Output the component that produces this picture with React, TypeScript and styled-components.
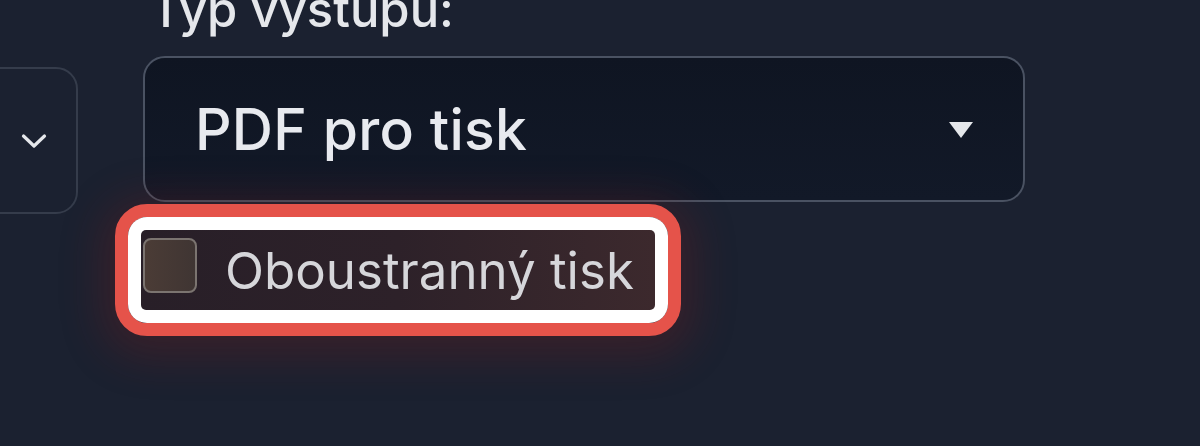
import React from "react";
import styled, { createGlobalStyle } from "styled-components";

const Global = createGlobalStyle`
  html, body {
    margin: 0;
    padding: 0;
    background: #1b2130;
    overflow: hidden;
  }
  body {
    font-family: Inter, "Noto Sans", "Liberation Sans", sans-serif;
    color: #e5e7eb;
  }
`;

const Page = styled.div`
  width: 1200px;
  height: 446px;
  display: flex;
  align-items: flex-start;
  gap: 65px;
  background: #1b2130;
  overflow: hidden;
`;

const SideSelect = styled.div`
  margin-left: -120px;
  margin-top: 67px;
  width: 198px;
  height: 147px;
  box-sizing: border-box;
  border: 2px solid #353c4b;
  border-radius: 22px;
  display: flex;
  align-items: center;
  justify-content: flex-end;
  padding-right: 29px;
  color: #e5e7eb;
`;

const Field = styled.div`
  margin-top: -20px;
  display: flex;
  flex-direction: column;
  width: 882px;
`;

const Label = styled.label`
  font-size: 49px;
  line-height: 59px;
  font-weight: 500;
  color: #e5e7eb;
  padding-left: 7px;
  margin-bottom: 17px;
  white-space: nowrap;
`;

const Select = styled.div`
  box-sizing: border-box;
  height: 146px;
  border: 2px solid #4a5262;
  border-radius: 22px;
  background: linear-gradient(180deg, #0f1522 0%, #121928 100%);
  display: flex;
  align-items: center;
  justify-content: space-between;
  padding: 0 50px 0 50px;
`;

const SelectText = styled.span`
  font-size: 57px;
  font-weight: 500;
  color: #e8eaef;
  letter-spacing: 0.3px;
`;

const Triangle = styled.span`
  width: 0;
  height: 0;
  border-left: 12.5px solid transparent;
  border-right: 12.5px solid transparent;
  border-top: 16px solid #e5e7eb;
  margin-top: 2px;
`;

const Highlight = styled.div`
  align-self: flex-start;
  margin-top: 2px;
  margin-left: -28px;
  border: 13px solid #e5534a;
  border-radius: 32px;
  box-shadow: 0 8px 40px 14px rgba(120, 30, 30, 0.3);
`;

const Halo = styled.div`
  padding: 13px;
  background: #ffffff;
  border-radius: 19px;
`;

const CheckRow = styled.label`
  box-sizing: border-box;
  height: 80px;
  display: flex;
  align-items: center;
  gap: 28px;
  padding: 0 21px 0 2px;
  border-radius: 5px;
  background: linear-gradient(90deg, #281f28 0%, #2d2129 50%, #3c292d 100%);
`;

const Box = styled.span`
  box-sizing: border-box;
  width: 54px;
  height: 55px;
  margin-top: -9px;
  border: 2px solid #7b7470;
  border-radius: 8px;
  background: linear-gradient(90deg, #4b3c36 0%, #3f3533 100%);
`;

const CheckText = styled.span`
  font-size: 51px;
  font-weight: 400;
  color: #d6d6da;
  letter-spacing: 0;
  white-space: nowrap;
`;

const Chevron = () => (
  <svg width="26" height="16" viewBox="0 0 26 16" fill="none">
    <path
      d="M2.5 3 L13 13 L23.5 3"
      stroke="#e5e7eb"
      strokeWidth="3.2"
      strokeLinecap="round"
      strokeLinejoin="round"
    />
  </svg>
);

export default function App() {
  return (
    <>
      <Global />
      <Page>
        <SideSelect>
          <Chevron />
        </SideSelect>
        <Field>
          <Label>Typ výstupu:</Label>
          <Select>
            <SelectText>PDF pro tisk</SelectText>
            <Triangle />
          </Select>
          <Highlight>
            <Halo>
              <CheckRow>
                <Box />
                <CheckText>Oboustranný tisk</CheckText>
              </CheckRow>
            </Halo>
          </Highlight>
        </Field>
      </Page>
    </>
  );
}
